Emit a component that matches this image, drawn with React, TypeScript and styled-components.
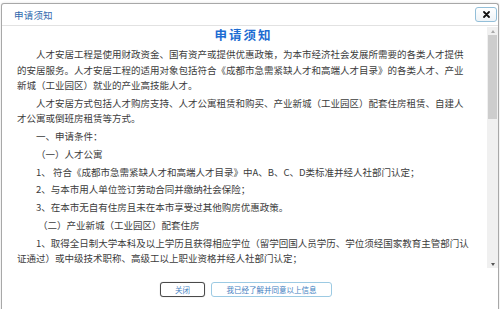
import React from "react";
import styled, { createGlobalStyle } from "styled-components";

const Global = createGlobalStyle`
  html, body { margin: 0; padding: 0; background: #ffffff; }
  body { font-family: "Noto Sans CJK SC", "Noto Sans", sans-serif; }
  * { box-sizing: border-box; }
`;

const Page = styled.div`
  width: 500px;
  height: 309px;
  overflow: hidden;
  padding: 3px 0 0 1px;
  background: #ffffff;
`;

const Dialog = styled.div`
  width: 498px;
  height: 320px;
  border: 1px solid #a8a8a8;
  border-bottom: none;
  border-radius: 3px 3px 0 0;
  background: #ffffff;
  display: flex;
  flex-direction: column;
  box-shadow: 0 0 3px rgba(0, 0, 0, 0.12);
`;

const TitleBar = styled.div`
  height: 22px;
  flex: none;
  display: flex;
  align-items: center;
  justify-content: space-between;
  padding: 0 1px 0 12px;
  border-bottom: 1px solid #e2e2e2;
`;

const TitleText = styled.span`
  font-size: 9.5px;
  color: #2f69ad;
  letter-spacing: 0.2px;
`;

const CloseButton = styled.button`
  width: 22px;
  height: 15px;
  padding: 0;
  display: flex;
  align-items: center;
  justify-content: center;
  border: 1px solid #93bfd9;
  border-radius: 3px;
  background: linear-gradient(#ffffff, #eef3f7);
  cursor: pointer;
`;

const BodyRow = styled.div`
  height: 242px;
  flex: none;
  display: flex;
`;

const Content = styled.div`
  flex: 1;
  min-width: 0;
  overflow: hidden;
  padding: 0 17px 0 15px;
  color: #3c3c3c;
  font-size: 9.5px;
`;

const Heading = styled.h1`
  margin: 0 0 3px;
  height: 18px;
  line-height: 18px;
  text-align: center;
  font-size: 12.5px;
  font-weight: 700;
  letter-spacing: 2px;
  color: #1c6cd2;
`;

const Para = styled.p<{ $shift?: number }>`
  margin: 0 0 2.3px;
  line-height: 15.5px;
  text-indent: 2em;
  padding-left: ${(p) => p.$shift ?? 0}px;
`;

const ScrollBar = styled.div`
  width: 11px;
  flex: none;
  display: flex;
  flex-direction: column;
  align-items: center;
  background: #f0f0f0;
  margin-top: 1px;
`;

const Arrow = styled.div<{ $down?: boolean }>`
  height: 8px;
  flex: none;
  display: flex;
  align-items: center;
  justify-content: center;
  &::after {
    content: "";
    width: 0;
    height: 0;
    border-left: 2.5px solid transparent;
    border-right: 2.5px solid transparent;
    ${(p) =>
      p.$down
        ? "border-top: 3px solid #555;"
        : "border-bottom: 3px solid #a9a9a9;"}
  }
`;

const Track = styled.div`
  flex: 1;
  width: 100%;
  padding: 0 1px;
`;

const Thumb = styled.div`
  height: 84px;
  background: #cdcdcd;
`;

const Footer = styled.div`
  display: flex;
  justify-content: center;
  gap: 6px;
  padding: 14px 8px 0 0;
`;

const Button = styled.button<{ $primary?: boolean }>`
  width: ${(p) => (p.$primary ? 45 : 121)}px;
  height: 15px;
  padding: 0;
  font-family: "Noto Sans CJK SC", sans-serif;
  font-size: 7.5px;
  line-height: 12px;
  color: #3f80bf;
  background: #ffffff;
  border-radius: 3px;
  border: 1px solid ${(p) => (p.$primary ? "#4a4a4a" : "#9ccae3")};
  box-shadow: ${(p) => (p.$primary ? "0 0 1px rgba(0,0,0,0.4)" : "none")};
  cursor: pointer;
  display: flex;
  align-items: center;
  justify-content: center;
`;

export default function App() {
  return (
    <>
      <Global />
      <Page>
        <Dialog>
          <TitleBar>
            <TitleText>申请须知</TitleText>
            <CloseButton aria-label="关闭">
              <svg width="7" height="7" viewBox="0 0 7 7">
                <path d="M1 1 L6 6 M6 1 L1 6" stroke="#111" strokeWidth="1.8" strokeLinecap="round" />
              </svg>
            </CloseButton>
          </TitleBar>
          <BodyRow>
            <Content>
              <Heading>申请须知</Heading>
              <Para>
                人才安居工程是使用财政资金、国有资产或提供优惠政策，为本市经济社会发展所需要的各类人才提供的安居服务。人才安居工程的适用对象包括符合《成都市急需紧缺人才和高端人才目录》的各类人才、产业新城（工业园区）就业的产业高技能人才。
              </Para>
              <Para>
                人才安居方式包括人才购房支持、人才公寓租赁和购买、产业新城（工业园区）配套住房租赁、自建人才公寓或倒班房租赁等方式。
              </Para>
              <Para>一、申请条件：</Para>
              <Para>（一）人才公寓</Para>
              <Para>1、 符合《成都市急需紧缺人才和高端人才目录》中A、B、C、D类标准并经人社部门认定；</Para>
              <Para>2、与本市用人单位签订劳动合同并缴纳社会保险；</Para>
              <Para>3、在本市无自有住房且未在本市享受过其他购房优惠政策。</Para>
              <Para $shift={2}>（二）产业新城（工业园区）配套住房</Para>
              <Para>
                1、取得全日制大学本科及以上学历且获得相应学位（留学回国人员学历、学位须经国家教育主管部门认证通过）或中级技术职称、高级工以上职业资格并经人社部门认定；
              </Para>
            </Content>
            <ScrollBar>
              <Arrow />
              <Track>
                <Thumb />
              </Track>
              <Arrow $down />
            </ScrollBar>
          </BodyRow>
          <Footer>
            <Button $primary>关闭</Button>
            <Button>我已经了解并同意以上信息</Button>
          </Footer>
        </Dialog>
      </Page>
    </>
  );
}
